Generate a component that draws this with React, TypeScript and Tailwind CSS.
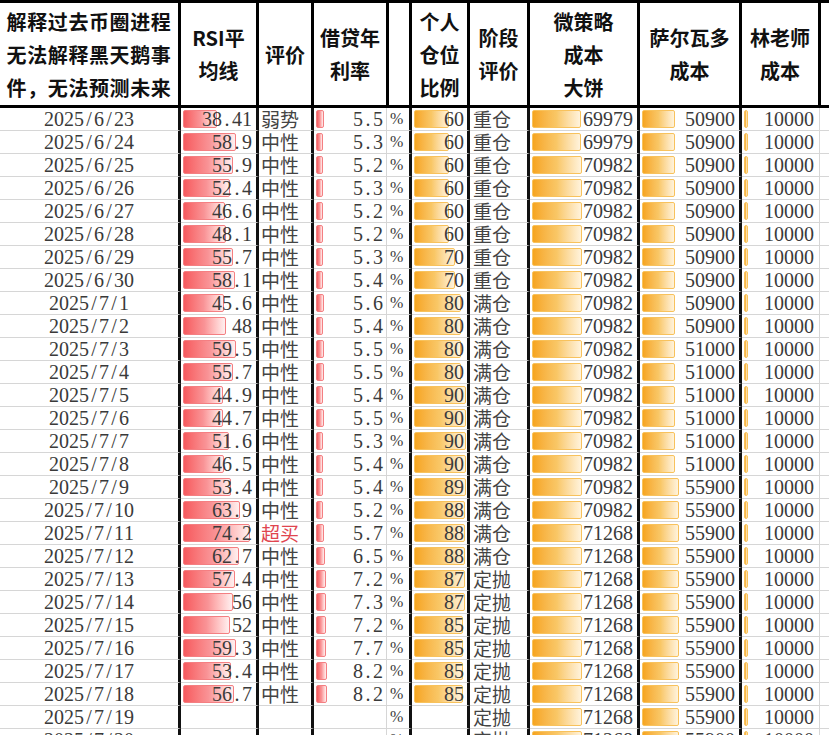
const serif = "font-['Liberation_Serif',serif]";
const cjk = "font-['Noto_Sans_CJK_SC',sans-serif]";

type Row = [string, number | null, string, number | null, number | null, string, number, number, number];

const rows: Row[] = [
    ["2025/6/23", 38.41, "弱势", 5.5, 60, "重仓", 69979, 50900, 10000],
    ["2025/6/24", 58.9, "中性", 5.3, 60, "重仓", 69979, 50900, 10000],
    ["2025/6/25", 55.9, "中性", 5.2, 60, "重仓", 70982, 50900, 10000],
    ["2025/6/26", 52.4, "中性", 5.3, 60, "重仓", 70982, 50900, 10000],
    ["2025/6/27", 46.6, "中性", 5.2, 60, "重仓", 70982, 50900, 10000],
    ["2025/6/28", 48.1, "中性", 5.2, 60, "重仓", 70982, 50900, 10000],
    ["2025/6/29", 55.7, "中性", 5.3, 70, "重仓", 70982, 50900, 10000],
    ["2025/6/30", 58.1, "中性", 5.4, 70, "重仓", 70982, 50900, 10000],
    ["2025/7/1", 45.6, "中性", 5.6, 80, "满仓", 70982, 50900, 10000],
    ["2025/7/2", 48, "中性", 5.4, 80, "满仓", 70982, 50900, 10000],
    ["2025/7/3", 59.5, "中性", 5.5, 80, "满仓", 70982, 51000, 10000],
    ["2025/7/4", 55.7, "中性", 5.5, 80, "满仓", 70982, 51000, 10000],
    ["2025/7/5", 44.9, "中性", 5.4, 90, "满仓", 70982, 51000, 10000],
    ["2025/7/6", 44.7, "中性", 5.5, 90, "满仓", 70982, 51000, 10000],
    ["2025/7/7", 51.6, "中性", 5.3, 90, "满仓", 70982, 51000, 10000],
    ["2025/7/8", 46.5, "中性", 5.4, 90, "满仓", 70982, 51000, 10000],
    ["2025/7/9", 53.4, "中性", 5.4, 89, "满仓", 70982, 55900, 10000],
    ["2025/7/10", 63.9, "中性", 5.2, 88, "满仓", 70982, 55900, 10000],
    ["2025/7/11", 74.2, "超买", 5.7, 88, "满仓", 71268, 55900, 10000],
    ["2025/7/12", 62.7, "中性", 6.5, 88, "满仓", 71268, 55900, 10000],
    ["2025/7/13", 57.4, "中性", 7.2, 87, "定抛", 71268, 55900, 10000],
    ["2025/7/14", 56, "中性", 7.3, 87, "定抛", 71268, 55900, 10000],
    ["2025/7/15", 52, "中性", 7.2, 85, "定抛", 71268, 55900, 10000],
    ["2025/7/16", 59.3, "中性", 7.7, 85, "定抛", 71268, 55900, 10000],
    ["2025/7/17", 53.4, "中性", 8.2, 85, "定抛", 71268, 55900, 10000],
    ["2025/7/18", 56.7, "中性", 8.2, 85, "定抛", 71268, 55900, 10000],
    ["2025/7/19", null, "", null, null, "定抛", 71268, 55900, 10000],
    ["2025/7/20", null, "", null, null, "定抛", 71268, 55900, 10000],
];

// half-width digits, one 10px cell per character
const Mono = ({ s }: { s: string }) => (
    <>
        {s.split("").map((c, i) => (
            <span key={i} className="inline-block w-[10px] text-center">
                {c}
            </span>
        ))}
    </>
);

const RedBar = ({ w }: { w: number }) => (
    <div
        className="absolute left-[2px] top-[2px] h-[18px] rounded-[2px] border border-[#f47f82] bg-linear-to-r from-[#f6595e] via-[#f99396] to-[#fef0f0]"
        style={{ width: w }}
    />
);

const OrangeBar = ({ w }: { w: number }) => (
    <div
        className="absolute left-[2px] top-[2px] h-[18px] rounded-[2px] border border-[#f8c25c] bg-linear-to-r from-[#f6a51c] via-[#f9c766] to-[#fff3dc]"
        style={{ width: w }}
    />
);

const HeadCell = ({ w, lines }: { w: string; lines: string[] }) => (
    <div className={`${w} h-full shrink-0 border-r-[3px] border-black flex flex-col items-center justify-center text-center`}>
        {lines.map((l) => (
            <div key={l} className="leading-[33px]">
                {l}
            </div>
        ))}
    </div>
);

const cell = "relative h-full shrink-0 border-b border-[#d6d6d6] flex items-center leading-[22px]";
const blk = "border-r-[3px] border-r-[#111]";
const gry = "border-r border-r-[#d6d6d6]";

export default function App() {
    return (
        <div className="w-[829px] h-[735px] overflow-hidden bg-white">
            <div className={`flex h-[108px] border-t-[3px] border-b-[3px] border-black text-[20px] font-bold text-[#111] ${cjk}`}>
                <HeadCell w="w-[181px] tracking-[0.6px]" lines={["解释过去币圈进程", "无法解释黑天鹅事", "件，无法预测未来"]} />
                <HeadCell w="w-[78px]" lines={["RSI平", "均线"]} />
                <HeadCell w="w-[55px]" lines={["评价"]} />
                <HeadCell w="w-[75px]" lines={["借贷年", "利率"]} />
                <HeadCell w="w-[23px]" lines={[]} />
                <HeadCell w="w-[58px]" lines={["个人", "仓位", "比例"]} />
                <HeadCell w="w-[60px]" lines={["阶段", "评价"]} />
                <HeadCell w="w-[110px]" lines={["微策略", "成本", "大饼"]} />
                <HeadCell w="w-[102px]" lines={["萨尔瓦多", "成本"]} />
                <HeadCell w="w-[79px]" lines={["林老师", "成本"]} />
                <div className="flex-1" />
            </div>

            <div className={`text-[20px] leading-[22px] text-[#3a3a3a] ${serif}`}>
                {rows.map(([date, rsi, ev, loan, pos, stage, mstr, salv, lin]) => (
                    <div key={date} className="flex h-[23px]">
                        <div className={`${cell} ${blk} w-[181px] justify-center`}>
                            <Mono s={date} />
                        </div>
                        <div className={`${cell} ${blk} w-[78px] justify-end pr-[4px]`}>
                            {rsi !== null && <RedBar w={rsi * 0.92 - 1.3} />}
                            <span className="relative">{rsi !== null && <Mono s={String(rsi)} />}</span>
                        </div>
                        <div className={`${cell} ${blk} w-[55px] pl-[2px] text-[19px] ${cjk} ${ev === "超买" ? "text-[#e0454f]" : "text-[#444]"}`}>
                            {ev}
                        </div>
                        <div className={`${cell} ${gry} w-[73px] justify-end pr-[3px]`}>
                            {loan !== null && <RedBar w={loan * 1.2 + 1} />}
                            <span className="relative">{loan !== null && <Mono s={loan.toFixed(1)} />}</span>
                        </div>
                        <div className={`${cell} ${blk} w-[25px] pl-[3px] text-[16px]`}>%</div>
                        <div className={`${cell} ${blk} w-[58px] justify-end pr-[3px]`}>
                            {pos !== null && <OrangeBar w={pos * 0.57 + 1} />}
                            <span className="relative">{pos !== null && <Mono s={String(pos)} />}</span>
                        </div>
                        <div className={`${cell} ${blk} w-[60px] pl-[3px] text-[19px] text-[#444] ${cjk}`}>{stage}</div>
                        <div className={`${cell} ${blk} w-[110px] justify-end pr-[4px]`}>
                            <OrangeBar w={mstr / 1420} />
                            <span className="relative">
                                <Mono s={String(mstr)} />
                            </span>
                        </div>
                        <div className={`${cell} ${blk} w-[102px] justify-end pr-[4px]`}>
                            <OrangeBar w={salv * 0.0008 - 7.7} />
                            <span className="relative">
                                <Mono s={String(salv)} />
                            </span>
                        </div>
                        <div className={`${cell} ${gry} w-[78px] justify-end pr-[5px]`}>
                            <OrangeBar w={lin / 2500} />
                            <span className="relative">
                                <Mono s={String(lin)} />
                            </span>
                        </div>
                        <div className={`${cell} flex-1`} />
                    </div>
                ))}
            </div>
        </div>
    );
}
